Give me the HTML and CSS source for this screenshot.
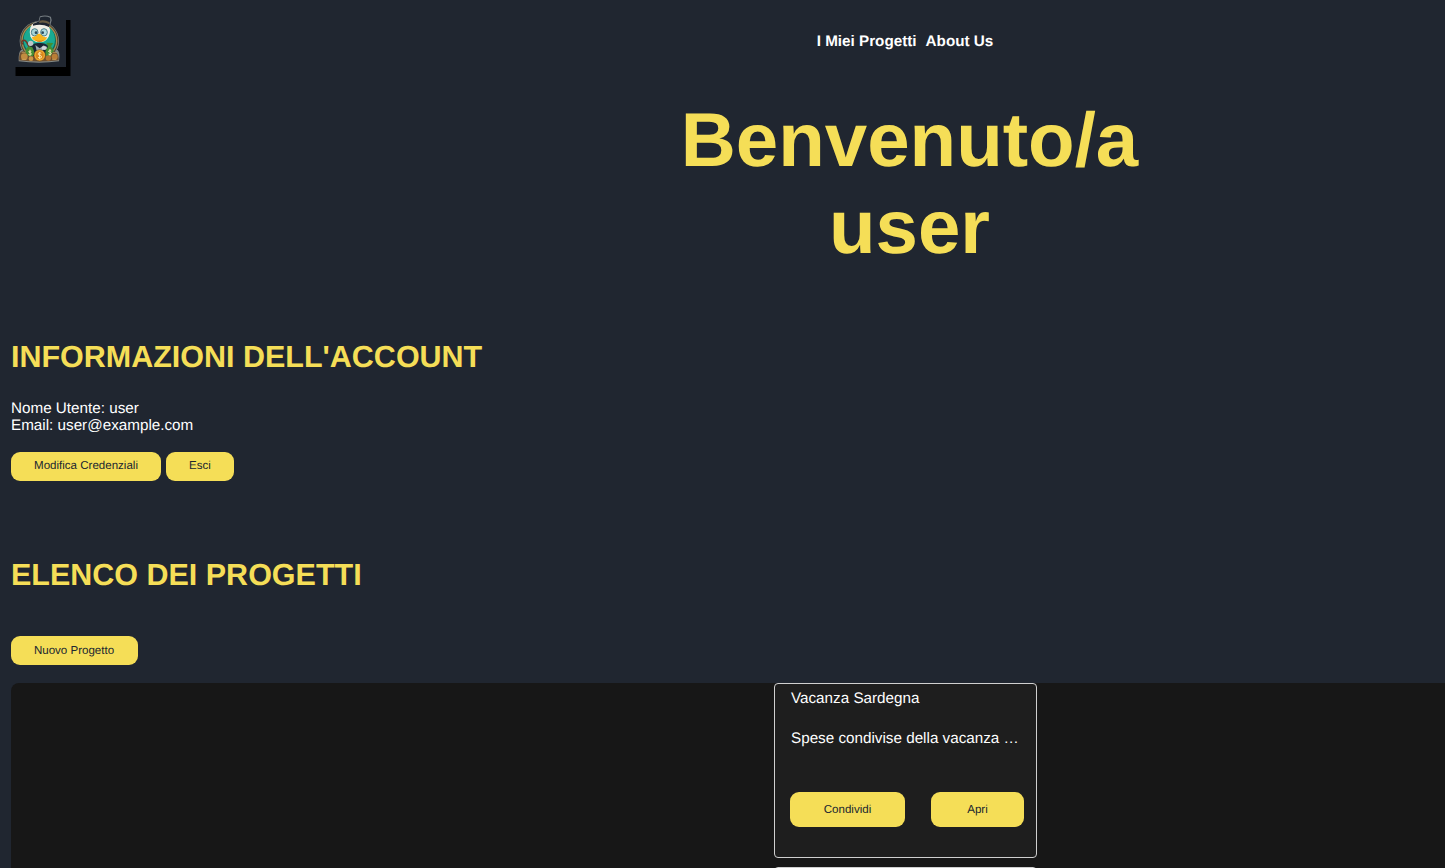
FILE: index.html
```html
<!DOCTYPE html>
<html lang="it">
<head>
<meta charset="utf-8">
<title>I Miei Progetti</title>
<link rel="stylesheet" href="styles.css">
</head>
<body>
<div class="page">
  <header class="header">
    <svg class="logo" viewBox="33 33 165 168" aria-hidden="true">
      <circle cx="118" cy="123" r="59" fill="#858a87"/>
      <path d="M100 74l17-8 4-15q15-5 30 1l2 9-5 17z" fill="#777e83" stroke="#777e83" stroke-width="4"/>
      <path d="M56 184q-1-27 7-34h110q8 8 4 34-59 8-121 0z" fill="#858a87"/>
      <circle cx="118" cy="122" r="57" fill="#4e4630"/>
      <circle cx="118" cy="122" r="54" fill="#a98b50"/>
      <circle cx="118" cy="122" r="50" fill="#12665b"/>
      <circle cx="118" cy="119" r="47" fill="#19ab92"/>
      <path d="M90 137q28-17 57 0l9 45H81z" fill="#182634"/>
      <path d="M106 135l13 10 14-10-4 17h-19z" fill="#9ba9ad"/>
      <path d="M91 109q-6-29 10-40 20-8 40 2 15 15 5 39-8 17-28 17-20 0-27-18z" fill="#f0eee4"/>
      <path d="M99 71l19-7 3-12q15-5 29 1l1 8-4 20q-22-11-48-4z" fill="#1d242f"/>
      <path d="M119 62q15-4 30 5l-1 6q-14-8-31-4z" fill="#695c42"/>
      <ellipse cx="104" cy="97" rx="10" ry="11" fill="#a8d5d8" stroke="#4b818a" stroke-width="3"/>
      <ellipse cx="132" cy="97" rx="10" ry="11" fill="#b4dce0" stroke="#4b818a" stroke-width="3"/>
      <circle cx="108" cy="98" r="4" fill="#294859"/><circle cx="128" cy="98" r="4" fill="#294859"/>
      <path d="M112 103q6-5 13 2 4 8 16 6-3 15-23 14-21-1-22-14 12 0 16-8z" fill="#f7b41c"/>
      <path d="M105 119q14 7 27 0-13 13-27 0z" fill="#c76b15"/>
      <path d="M99 164l-17-34q-7-14-15-7-5 7 3 9" fill="none" stroke="#713927" stroke-width="5"/>
      <circle cx="92" cy="130" r="8" fill="#bcc5c8"/><ellipse cx="133" cy="144" rx="8" ry="6" fill="#d1d7d8"/>
      <path d="M82 142q7-5 15 0 12 22-1 29H80q-9-14 2-29z" fill="#438e34"/>
      <path d="M139 128l21 1-7 10q15 17 5 33h-18q-10-15 4-32z" fill="#438e34"/>
      <path d="M58 181q-2-24 8-27 10-1 18 14h69q3-15 13-13 11 7 10 26-58 7-118 0z" fill="#70502f"/>
      <circle cx="73" cy="170" r="10" fill="#c28c40"/><circle cx="93" cy="176" r="7" fill="#cd9847"/><circle cx="145" cy="174" r="8" fill="#b37430"/><circle cx="164" cy="170" r="9" fill="#b97e36"/>
      <path d="M65 157h12M158 158h12M65 178h14M156 178h13" stroke="#d9ae62" stroke-width="2"/>
      <circle cx="119" cy="166" r="17" fill="#f0ac32" stroke="#744819" stroke-width="1.5"/><circle cx="119" cy="166" r="12" fill="#d9861d"/>
      <path d="M124 160q-5-4-9 0-2 5 5 6 7 2 4 7-4 3-10-1M119 156v21M94 154q-7-3-8 2 9 2 8 7-4 4-9 0M90 149v18M154 153q-7-4-9 1 10 3 9 8-4 4-9 0M150 147v20" fill="none" stroke="#fff2b6" stroke-width="2.5"/>
    </svg>
    <nav class="nav"><a class="nav-link">I Miei Progetti</a><a class="nav-link">About Us</a></nav>
  </header>
  <h1 class="welcome">Benvenuto/a<br>user</h1>
  <section class="account">
    <h2 class="heading">INFORMAZIONI DELL'ACCOUNT</h2>
    <p class="details">Nome Utente: user<br>Email: user@example.com</p>
    <div class="actions"><button class="button edit">Modifica Credenziali</button><button class="button exit">Esci</button></div>
  </section>
  <section class="projects">
    <h2 class="heading">ELENCO DEI PROGETTI</h2>
    <button class="button new">Nuovo Progetto</button>
    <div class="list">
      <article class="card">
        <p class="card-text">Vacanza Sardegna</p>
        <p class="card-text description">Spese condivise della vacanza …</p>
        <div class="card-actions"><button class="button share">Condividi</button><button class="button open">Apri</button></div>
      </article>
      <article class="card"></article>
    </div>
  </section>
</div>
</body>
</html>
```
FILE: styles.css
```css
* { box-sizing: border-box; }
html, body { height: 100%; overflow: hidden; }
body { margin: 0; background: #202630; color: #fff; font: 15.24px/17px "Liberation Sans", Arial, sans-serif; text-rendering: geometricPrecision; }
h1, h2, p { margin: 0; }
.page { width: 1800px; height: 868px; overflow: hidden; padding: 11px 0 0 11px; }
.header { display: grid; grid-template-columns: 1fr; height: 86px; }
.logo { grid-area: 1 / 1; width: 55px; height: 56px; box-shadow: 4.5px 9px 0 #000; }
.nav { grid-area: 1 / 1; justify-self: center; display: flex; gap: 9px; padding: 22px 1px 0 0; font-weight: bold; }
.welcome { width: 1797px; color: #f5de57; font-size: 76.25px; line-height: 87px; text-align: center; }
.account { padding-top: 69px; }
.heading { color: #f5de57; font-size: 30.49px; line-height: 35px; }
.details { padding-top: 25px; }
.actions { display: flex; gap: 5px; padding-top: 18px; }
.button { display: block; height: 29px; padding: 0; border: 0; border-radius: 9px; background: #f5de57; color: #202630; font: 11.55px/13px "Liberation Sans", Arial, sans-serif; text-rendering: geometricPrecision; }
.edit { width: 150px; }
.exit { width: 68px; }
.projects { padding-top: 77px; }
.new { width: 127px; margin-top: 43px; padding: 2px 1px 0 0; }
.list { display: flex; flex-direction: column; align-items: center; gap: 9px; margin-top: 18px; border-radius: 8px; background: #171717; }
.card { width: 263px; height: 175px; flex: none; padding: 6px 12px 0 15px; border: 1px solid #d0d0d0; border-radius: 4px; background: #1e1e1e; }
.card-text { padding-left: 1px; }
.description { margin-top: 23px; white-space: nowrap; }
.card-actions { display: flex; justify-content: space-between; padding-top: 45px; }
.card-actions .button { height: 35px; padding: 2px 0 0; }
.share { width: 115px; }
.open { width: 93px; }
```
